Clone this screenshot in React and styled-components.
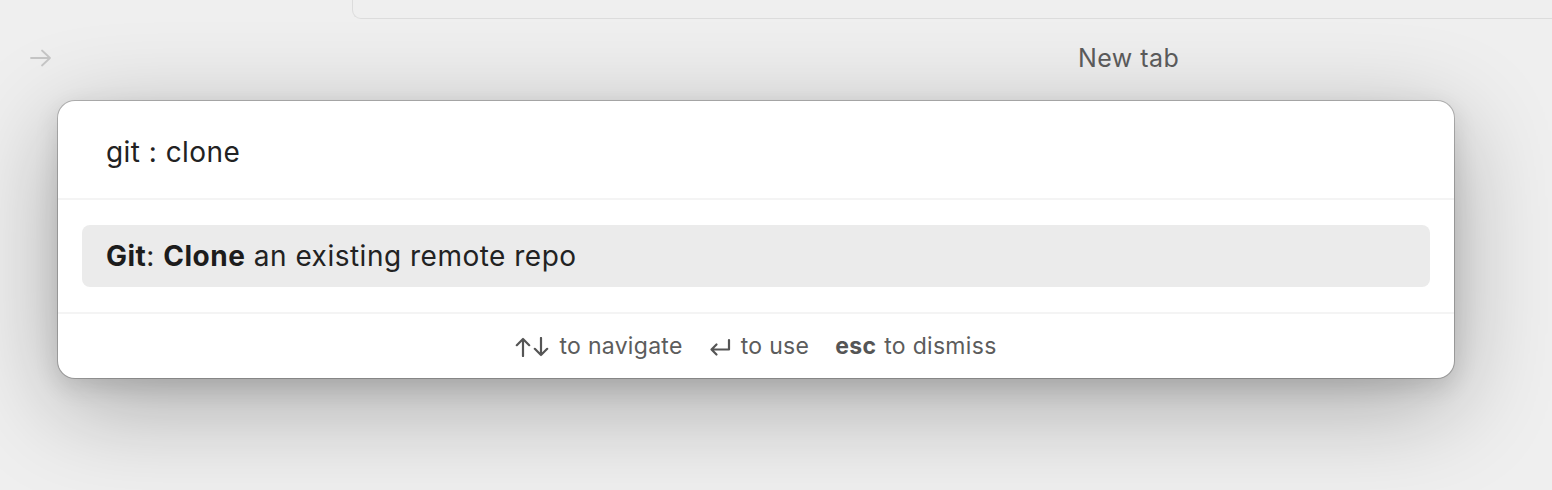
import React from "react";
import styled, { createGlobalStyle } from "styled-components";

const GlobalStyle = createGlobalStyle`
  html, body {
    margin: 0;
    padding: 0;
    background: #efefef;
    font-family: Inter, "Noto Sans", "Liberation Sans", sans-serif;
    -webkit-font-smoothing: antialiased;
  }
  #root {
    height: 490px;
    overflow: hidden;
  }
`;

const Page = styled.div`
  height: 490px;
  background: #efefef;
`;

const AddressBox = styled.div`
  margin-left: 352px;
  height: 18px;
  border: 1.5px solid #dcdcdc;
  border-top: none;
  border-right: none;
  border-bottom-left-radius: 9px;
  background: #efefef;
`;

const TabRow = styled.div`
  display: flex;
  align-items: center;
  height: 78px;
  padding-left: 29px;
`;

const TabTitle = styled.span`
  margin-left: 1025px;
  font-size: 25px;
  color: #5a5a5a;
  letter-spacing: 0.45px;
`;

const Palette = styled.div`
  margin-left: 58px;
  margin-top: 4px;
  width: 1396px;
  background: #fff;
  border-radius: 17px;
  box-shadow: 0 0 0 1px rgba(0, 0, 0, 0.22), 0 8px 24px rgba(0, 0, 0, 0.12),
    0 26px 100px rgba(0, 0, 0, 0.3);
  overflow: hidden;
`;

const Query = styled.div`
  height: 99px;
  display: flex;
  align-items: center;
  padding: 4px 48px 0;
  box-sizing: border-box;
  font-size: 28px;
  letter-spacing: 0.45px;
  color: #222;
  border-bottom: 2px solid #f4f4f4;
`;

const Results = styled.div`
  padding: 25px 24px 25px;
  border-bottom: 2px solid #f4f4f4;
`;

const Item = styled.div`
  height: 62px;
  display: flex;
  align-items: center;
  padding: 0 24px;
  border-radius: 8px;
  background: ${(p) => (p.$active ? "#ebebeb" : "transparent")};
  font-size: 28px;
  letter-spacing: 0.5px;
  color: #222;
  b {
    font-weight: 700;
    color: #1c1c1c;
  }
`;

const Footer = styled.div`
  height: 64px;
  display: flex;
  align-items: center;
  justify-content: center;
  gap: 26px;
  font-size: 23px;
  letter-spacing: 0.3px;
  color: #5c5c5c;
`;

const Hint = styled.span`
  display: flex;
  align-items: center;
  gap: ${(p) => p.$gap || 9}px;
  b {
    font-weight: 700;
    color: #555;
  }
`;

const Keys = styled.span`
  display: flex;
  align-items: center;
  gap: 2px;
  margin-top: 1px;
`;

const ArrowRight = () => (
  <svg width="24" height="20" viewBox="0 0 24 20" fill="none" stroke="#c4c4c4" strokeWidth="1.8" strokeLinecap="round" strokeLinejoin="round">
    <path d="M2 10h19M13 2.5l8 7.5-8 7.5" />
  </svg>
);

const UpArrow = () => (
  <svg width="16" height="20" viewBox="0 0 16 20" fill="none" stroke="#555" strokeWidth="2.2" strokeLinecap="round" strokeLinejoin="round">
    <path d="M8 19V2M1.8 8.2L8 2l6.2 6.2" />
  </svg>
);

const DownArrow = () => (
  <svg width="16" height="20" viewBox="0 0 16 20" fill="none" stroke="#555" strokeWidth="2.2" strokeLinecap="round" strokeLinejoin="round">
    <path d="M8 1v17M1.8 11.8L8 18l6.2-6.2" />
  </svg>
);

const ReturnArrow = () => (
  <svg width="22" height="20" viewBox="0 0 22 20" fill="none" stroke="#555" strokeWidth="2.2" strokeLinecap="round" strokeLinejoin="round">
    <path d="M20 3v9.5H2.5M7.5 7.5l-5 5 5 5" />
  </svg>
);

export default function App() {
  return (
    <Page>
      <GlobalStyle />
      <AddressBox />
      <TabRow>
        <ArrowRight />
        <TabTitle>New tab</TabTitle>
      </TabRow>
      <Palette>
        <Query>git : clone</Query>
        <Results>
          <Item $active>
            <span>
              <b>Git</b>: <b>Clone</b> an existing remote repo
            </span>
          </Item>
        </Results>
        <Footer>
          <Hint $gap={10}>
            <Keys>
              <UpArrow />
              <DownArrow />
            </Keys>
            to navigate
          </Hint>
          <Hint $gap={10}>
            <Keys>
              <ReturnArrow />
            </Keys>
            to use
          </Hint>
          <Hint $gap={8}>
            <b>esc</b>
            <span>to dismiss</span>
          </Hint>
        </Footer>
      </Palette>
    </Page>
  );
}
